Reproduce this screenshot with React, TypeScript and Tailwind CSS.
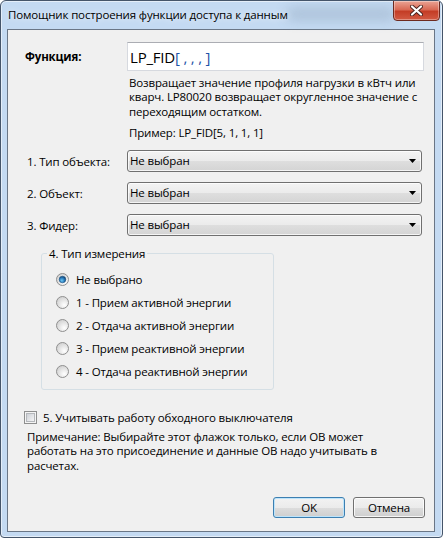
import React from 'react';

const font = "font-['Segoe_UI','Open_Sans','Noto_Sans',sans-serif]";
const txt = 'text-[11.5px] tracking-[-0.15px] text-black';

const Radio = ({ checked }: { checked?: boolean }) => (
  <svg width="13" height="13" viewBox="0 0 13 13" className="shrink-0">
    <defs>
      <radialGradient id="rfill" cx="0.65" cy="0.7" r="0.7">
        <stop offset="0" stopColor="#ffffff" />
        <stop offset="1" stopColor="#d2d2d2" />
      </radialGradient>
      <radialGradient id="rdot" cx="0.4" cy="0.65" r="0.6">
        <stop offset="0" stopColor="#6fc6f2" />
        <stop offset="0.6" stopColor="#2a7fc0" />
        <stop offset="1" stopColor="#154a7a" />
      </radialGradient>
    </defs>
    <circle cx="6.5" cy="6.5" r="6" fill="url(#rfill)" stroke="#8f8f8f" strokeWidth="1" />
    {checked && <circle cx="6.5" cy="6.5" r="3.3" fill="url(#rdot)" stroke="#1a4f80" strokeWidth="0.6" />}
  </svg>
);

const Checkbox = () => (
  <svg width="13" height="13" viewBox="0 0 13 13" className="shrink-0">
    <defs>
      <linearGradient id="cfill" x1="0" y1="0" x2="1" y2="1">
        <stop offset="0" stopColor="#cbcfd5" />
        <stop offset="1" stopColor="#f7f7f7" />
      </linearGradient>
    </defs>
    <rect x="0.5" y="0.5" width="12" height="12" fill="#f4f4f4" stroke="#8e8f8f" />
    <rect x="2.5" y="2.5" width="8" height="8" fill="url(#cfill)" stroke="#b4b7bb" strokeWidth="1" />
  </svg>
);

const Combo = ({ value }: { value: string }) => (
  <div className="w-[295px] h-[22px] flex items-center justify-between rounded-[3px] border border-[#707070] bg-[linear-gradient(#f3f3f3,#ebebeb_50%,#dedede_51%,#d4d4d4)] shadow-[inset_0_0_0_1px_rgba(255,255,255,0.75)] pl-[2px] pr-[5px]">
    <span className={`${txt} leading-[14px]`}>{value}</span>
    <svg width="7" height="4" viewBox="0 0 7 4">
      <path d="M0 0 H7 L3.5 4 Z" fill="#000" />
    </svg>
  </div>
);

const Row = ({ label, children }: { label: string; children: React.ReactNode }) => (
  <div className="flex items-center">
    <div className={`w-[119px] pl-[19px] ${txt}`}>{label}</div>
    {children}
  </div>
);

const options = [
  'Не выбрано',
  '1 - Прием активной энергии',
  '2 - Отдача активной энергии',
  '3 - Прием реактивной энергии',
  '4 - Отдача реактивной энергии',
];

const App = () => {
  return (
    <div className={`w-[446px] h-[539px] bg-white ${font}`}>
      <div className="relative w-[443px] h-[538px] flex flex-col rounded-t-[6px] rounded-b-[4px] border border-[#45556a] bg-[#c4daf2] shadow-[inset_0_0_0_1px_rgba(255,255,255,0.55)] overflow-hidden">
        {/* glass blur behind the title bar */}
        <div className="absolute left-[285px] top-[6px] w-[110px] h-[14px] rounded-full bg-[#8ea3b8] opacity-40 blur-[6px]" />

        <div className="relative h-[28px] flex items-start justify-between pl-[7px] pr-[2px]">
          <span className={`mt-[6px] ${txt} leading-[16px] [text-shadow:0_0_6px_rgba(255,255,255,0.9)]`}>
            Помощник построения функции доступа к данным
          </span>
          <div className="-mt-px w-[47px] h-[21px] flex items-center justify-center rounded-b-[4px] border border-[#6d2a20] bg-[linear-gradient(#eaa495,#d96a55_45%,#c43d26_55%,#d25a43)] shadow-[inset_0_0_0_1px_rgba(255,255,255,0.35)]">
            <svg width="13" height="11" viewBox="0 0 13 11">
              <path d="M2 1.5 L11 9.5 M11 1.5 L2 9.5" stroke="#4a2420" strokeWidth="4" strokeLinecap="round" />
              <path d="M2 1.5 L11 9.5 M11 1.5 L2 9.5" stroke="#ffffff" strokeWidth="2.2" strokeLinecap="round" />
            </svg>
          </div>
        </div>

        <div className="flex-1 pl-[6px] pr-[7px] pb-[5px] flex">
          <div className="flex-1 border border-[#6a7686] bg-[#f0f0f0] flex flex-col">
            {/* function */}
            <div className="flex items-center mt-[12px]">
              <div className={`w-[119px] pl-[17px] ${txt} font-bold`}>Функция:</div>
              <div className="w-[297px] h-[29px] flex items-center bg-white border border-[#d6d9df] border-t-[#abadb3] pl-[2px]">
                <span className="text-[15px] tracking-[-0.2px] leading-[20px] text-black">
                  LP_FID<span className="text-[#1f54a8]">[ , , , ]</span>
                </span>
              </div>
            </div>
            <div className={`ml-[121px] mt-[5px] ${txt} leading-[14.3px] whitespace-nowrap`}>
              Возвращает значение профиля нагрузки в кВтч или
              <br />
              кварч. LP80020 возвращает округленное значение с
              <br />
              переходящим остатком.
            </div>
            <div className={`ml-[121px] mt-[7px] ${txt} leading-[14.3px]`}>
              Пример: LP_FID[5, 1, 1, 1]
            </div>

            {/* selects */}
            <div className="mt-[10px] flex flex-col gap-[10px]">
              <Row label="1. Тип объекта:">
                <Combo value="Не выбран" />
              </Row>
              <Row label="2. Объект:">
                <Combo value="Не выбран" />
              </Row>
              <Row label="3. Фидер:">
                <Combo value="Не выбран" />
              </Row>
            </div>

            {/* measurement type */}
            <fieldset className="ml-[33px] mt-[10px] w-[233px] h-[144px] border border-[#d5dfe5] rounded-[3px] pb-[4px]">
              <legend className={`ml-[5px] px-[2px] ${txt} leading-[15px]`}>4. Тип измерения</legend>
              <div className="mt-[7px] pl-[14px] flex flex-col">
                {options.map((o, i) => (
                  <div key={o} className="h-[23px] flex items-center gap-[7px]">
                    <Radio checked={i === 0} />
                    <span className={txt}>{o}</span>
                  </div>
                ))}
              </div>
            </fieldset>

            {/* bypass switch */}
            <div className="mt-[20px] ml-[16px] flex items-center gap-[6px]">
              <Checkbox />
              <span className={`${txt} leading-[15px]`}>5. Учитывать работу обходного выключателя</span>
            </div>
            <div className={`ml-[19px] mt-[5px] ${txt} leading-[14.3px] whitespace-nowrap`}>
              Примечание: Выбирайте этот флажок только, если ОВ может
              <br />
              работать на это присоединение и данные ОВ надо учитывать в
              <br />
              расчетах.
            </div>

            {/* buttons */}
            <div className="mt-auto mb-[13px] mr-[9px] flex justify-end gap-[8px]">
              <button className={`w-[72px] h-[21px] rounded-[3px] border border-[#3c7fb1] bg-[linear-gradient(#f2f2f2,#ebebeb_50%,#dddddd_51%,#cfcfcf)] shadow-[inset_0_0_0_1px_#bde4fb] ${txt}`}>
                OK
              </button>
              <button className={`w-[72px] h-[21px] rounded-[3px] border border-[#707070] bg-[linear-gradient(#f2f2f2,#ebebeb_50%,#dddddd_51%,#cfcfcf)] shadow-[inset_0_0_0_1px_rgba(255,255,255,0.8)] ${txt}`}>
                Отмена
              </button>
            </div>
          </div>
        </div>
      </div>
    </div>
  );
};

export default App;
